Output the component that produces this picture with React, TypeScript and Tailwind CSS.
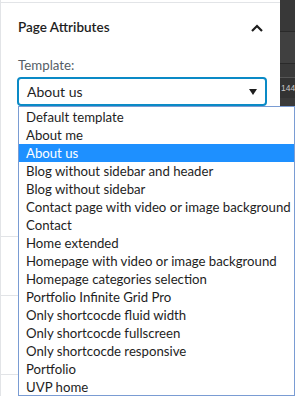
import React from "react";

const items = [
  "Default template",
  "About me",
  "About us",
  "Blog without sidebar and header",
  "Blog without sidebar",
  "Contact page with video or image background",
  "Contact",
  "Home extended",
  "Homepage with video or image background",
  "Homepage categories selection",
  "Portfolio Infinite Grid Pro",
  "Only shortcocde fluid width",
  "Only shortcocde fullscreen",
  "Only shortcocde responsive",
  "Portfolio",
  "UVP home",
];

export default function App() {
  return (
    <div
      className="relative w-[295px] h-[396px] overflow-hidden bg-white flex"
      style={{ fontFamily: 'Lato, "Noto Sans", sans-serif' }}
    >
      {/* main panel */}
      <div className="w-[280px] h-full border-l border-[#e2e4e7] flex flex-col">
        <div className="h-[3px] border-b border-[#e2e4e7]" />
        <div className="flex items-center justify-between pl-[17px] pr-[16px] pt-[4px] h-[44px]">
          <span className="text-[13.5px] font-semibold text-[#1e1e1e]">Page Attributes</span>
          <svg width="14" height="10" viewBox="0 0 14 10" className="mt-[1px]">
            <path d="M2 8 L7 3 L12 8" stroke="#1e1e1e" strokeWidth="2.2" fill="none" />
          </svg>
        </div>
        <div className="pl-[17px] pt-[9px] text-[13.3px] text-[#555d66] leading-[18px]">Template:</div>
        <div className="ml-[16px] mt-[3px] w-[250px] h-[29px] border-2 border-[#0a8ac6] rounded-[4px] flex items-center justify-between pl-[8px] pr-[8px]">
          <span className="text-[14px] text-[#1e1e1e]">About us</span>
          <svg width="8" height="6" viewBox="0 0 8 6">
            <path d="M0 0 L8 0 L4 6 Z" fill="#1e1e1e" />
          </svg>
        </div>
        {/* peeks of underlying content on the left */}
        <div className="mt-[130px] w-[18px] border-t border-[#e2e4e7]" />
        <div className="mt-[58px] w-[18px] border-t border-[#e2e4e7]" />
        <div className="mt-[78px] w-[18px] border-t border-[#e2e4e7]" />
      </div>
      {/* dark strip on the right */}
      <div className="w-[15px] h-full bg-[#3c3c3c] flex flex-col">
        <div className="h-[32px] bg-[#383838] border-b border-[#2a2a2a]" />
        <div className="h-[32px] bg-[#404040] border-b border-[#2a2a2a]" />
        <div className="h-[14px] bg-[#3a3a3a] border-b border-[#555]" />
        <div className="h-[20px] bg-[#333] pl-[1px] text-[8.5px] leading-[20px] text-[#c8c8c8] whitespace-nowrap" style={{ fontFamily: '"Liberation Sans", sans-serif' }}>144</div>
        <div className="flex-1 bg-[#3a3a3a]" />
      </div>
      {/* dropdown list */}
      <div className="absolute left-[18px] top-[106px] w-[277px] h-[290px] border border-[#7a9cd3] bg-white pt-[1px]">
        {items.map((t) => (
          <div
            key={t}
            className={
              "h-[18px] pl-[7px] text-[13.2px] leading-[18px] whitespace-nowrap " +
              (t === "About us" ? "bg-[#1e90ff] text-white" : "text-[#1e1e1e]")
            }
          >
            {t}
          </div>
        ))}
      </div>
    </div>
  );
}
